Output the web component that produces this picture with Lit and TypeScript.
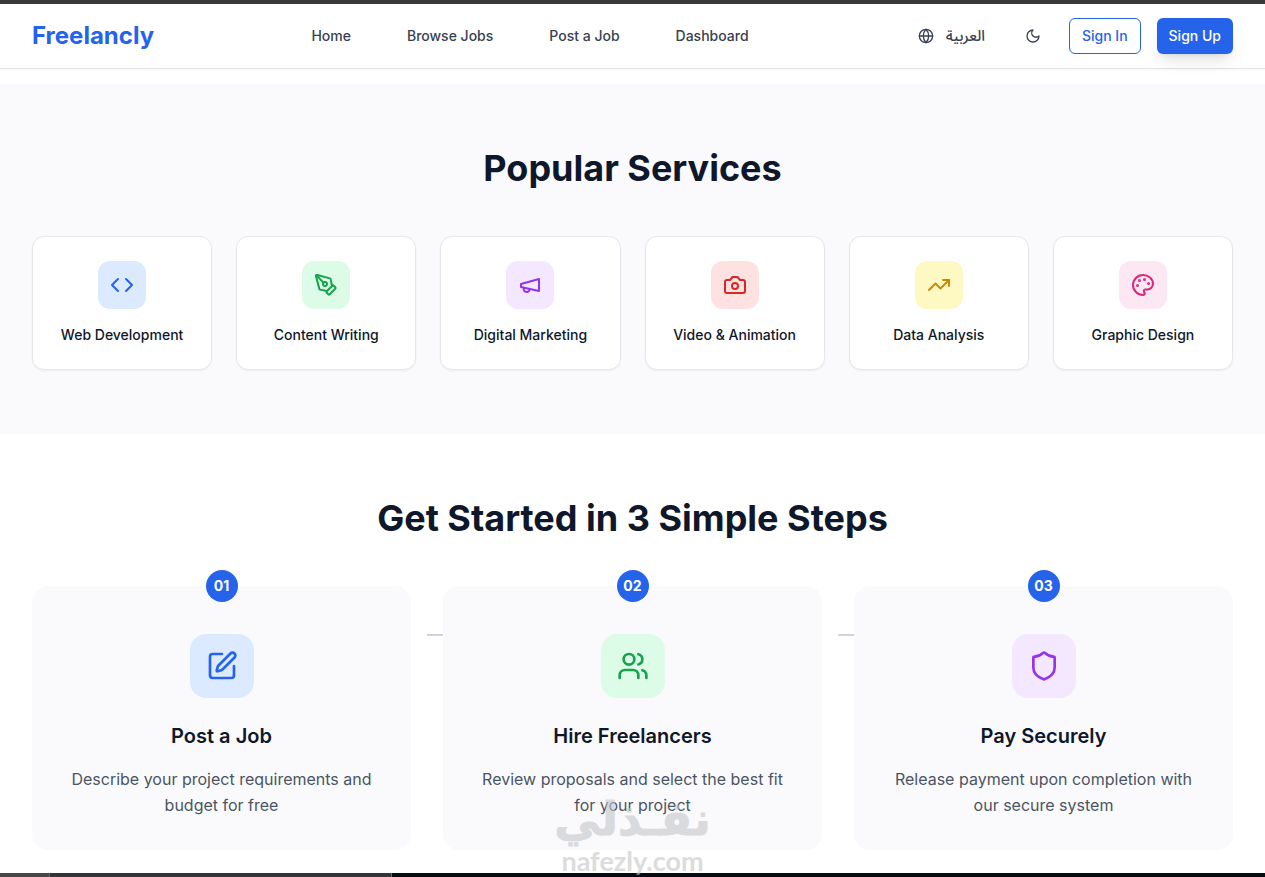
import { LitElement, html, css, svg } from "lit";
import { customElement } from "lit/decorators.js";

const icons = {
  globe: svg`<circle cx="12" cy="12" r="10"/><path d="M12 2a14.5 14.5 0 0 0 0 20 14.5 14.5 0 0 0 0-20"/><path d="M2 12h20"/>`,
  moon: svg`<path d="M12 3a6 6 0 0 0 9 9 9 9 0 1 1-9-9Z"/>`,
  code: svg`<path d="m16 18 6-6-6-6"/><path d="m8 6-6 6 6 6"/>`,
  pen: svg`<path d="M15.707 21.293a1 1 0 0 1-1.414 0l-1.586-1.586a1 1 0 0 1 0-1.414l5.586-5.586a1 1 0 0 1 1.414 0l1.586 1.586a1 1 0 0 1 0 1.414z"/><path d="m18 13-1.375-6.874a1 1 0 0 0-.746-.776L3.235 2.028a1 1 0 0 0-1.207 1.207L5.35 15.879a1 1 0 0 0 .776.746L13 18"/><path d="m2.3 2.3 7.286 7.286"/><circle cx="11" cy="11" r="2"/>`,
  megaphone: svg`<path d="m3 11 18-5v12L3 14v-3z"/><path d="M11.6 16.8a3 3 0 1 1-5.8-1.6"/>`,
  camera: svg`<path d="M14.5 4h-5L7 7H4a2 2 0 0 0-2 2v9a2 2 0 0 0 2 2h16a2 2 0 0 0 2-2V9a2 2 0 0 0-2-2h-3l-2.5-3z"/><circle cx="12" cy="13" r="3"/>`,
  trend: svg`<path d="m22 7-8.5 8.5-5-5L2 17"/><path d="M16 7h6v6"/>`,
  palette: svg`<circle cx="13.5" cy="6.5" r=".5" fill="currentColor"/><circle cx="17.5" cy="10.5" r=".5" fill="currentColor"/><circle cx="8.5" cy="7.5" r=".5" fill="currentColor"/><circle cx="6.5" cy="12.5" r=".5" fill="currentColor"/><path d="M12 2C6.5 2 2 6.5 2 12s4.5 10 10 10c.926 0 1.648-.746 1.648-1.688 0-.437-.18-.835-.437-1.125-.29-.289-.438-.652-.438-1.125a1.64 1.64 0 0 1 1.668-1.668h1.996c3.051 0 5.555-2.503 5.555-5.554C21.965 6.012 17.461 2 12 2z"/>`,
  edit: svg`<path d="M12 3H5a2 2 0 0 0-2 2v14a2 2 0 0 0 2 2h14a2 2 0 0 0 2-2v-7"/><path d="M18.375 2.625a1 1 0 0 1 3 3l-9.013 9.014a2 2 0 0 1-.853.505l-2.873.84a.5.5 0 0 1-.62-.62l.84-2.873a2 2 0 0 1 .506-.852z"/>`,
  users: svg`<path d="M16 21v-2a4 4 0 0 0-4-4H6a4 4 0 0 0-4 4v2"/><circle cx="9" cy="7" r="4"/><path d="M22 21v-2a4 4 0 0 0-3-3.87"/><path d="M16 3.13a4 4 0 0 1 0 7.75"/>`,
  shield: svg`<path d="M20 13c0 5-3.5 7.5-7.66 8.95a1 1 0 0 1-.67-.01C7.5 20.5 4 18 4 13V6a1 1 0 0 1 1-1c2 0 4.5-1.2 6.24-2.72a1.17 1.17 0 0 1 1.52 0C14.51 3.81 17 5 19 5a1 1 0 0 1 1 1z"/>`,
};

type IconName = keyof typeof icons;

const icon = (name: IconName, size: number) => html`<svg
  width=${size} height=${size} viewBox="0 0 24 24" fill="none" stroke="currentColor"
  stroke-width="2" stroke-linecap="round" stroke-linejoin="round" aria-hidden="true"
>${icons[name]}</svg>`;

const links = ["Home", "Browse Jobs", "Post a Job", "Dashboard"];

const services: { icon: IconName; tone: string; label: string }[] = [
  { icon: "code", tone: "blue", label: "Web Development" },
  { icon: "pen", tone: "green", label: "Content Writing" },
  { icon: "megaphone", tone: "purple", label: "Digital Marketing" },
  { icon: "camera", tone: "red", label: "Video & Animation" },
  { icon: "trend", tone: "yellow", label: "Data Analysis" },
  { icon: "palette", tone: "pink", label: "Graphic Design" },
];

const steps: { icon: IconName; tone: string; title: string; text: string }[] = [
  { icon: "edit", tone: "blue", title: "Post a Job", text: "Describe your project requirements and budget for free" },
  { icon: "users", tone: "green", title: "Hire Freelancers", text: "Review proposals and select the best fit for your project" },
  { icon: "shield", tone: "purple", title: "Pay Securely", text: "Release payment upon completion with our secure system" },
];

@customElement("app-root")
export class AppRoot extends LitElement {
  static styles = css`
    :host {
      display: flex;
      flex-direction: column;
      height: 100vh;
      overflow: hidden;
      position: relative;
      background: #fff;
      color: #0f172a;
      font-family: Inter, "DejaVu Sans", sans-serif;
      font-size: 14px;
      line-height: 20px;
    }
    * { box-sizing: border-box; }
    h2, h3, p { margin: 0; }
    svg { display: block; flex: none; }
    a { color: inherit; text-decoration: none; }
    button { font: inherit; color: inherit; background: none; border: 0; cursor: pointer; }

    .edge { flex: none; height: 4px; background: #3a3a3a; }
    .header {
      flex: none;
      display: flex;
      align-items: center;
      justify-content: space-between;
      height: 65px;
      padding: 0 32px;
      border-bottom: 1px solid #e2e4e8;
      box-shadow: 0 1px 2px rgb(0 0 0 / 4%);
      font-weight: 500;
      color: #374151;
    }
    .logo { font-size: 24px; line-height: 32px; font-weight: 700; color: #2563eb; }
    .nav { display: flex; gap: 32px; }
    .nav a { padding: 8px 12px; }
    .actions { display: flex; align-items: center; gap: 16px; }
    .ghost, .sign {
      display: flex;
      align-items: center;
      justify-content: center;
      height: 36px;
      padding: 0 12px;
      border-radius: 6px;
    }
    .ghost { gap: 12px; }
    .arabic { font-family: "Noto Sans Arabic", "DejaVu Sans", sans-serif; font-size: 15px; }
    .sign.in { border: 1px solid #2563eb; color: #2563eb; }
    .sign.up {
      background: #2563eb;
      color: #fff;
      box-shadow: 0 10px 15px -3px rgb(0 0 0 / 10%), 0 4px 6px -4px rgb(0 0 0 / 10%);
    }

    .main { flex: 1; min-height: 0; overflow-y: auto; scrollbar-width: none; padding-top: 15px; }
    .section { padding: 64px 32px; }
    .tinted { background: #fafafc; }
    .title {
      margin-bottom: 48px;
      text-align: center;
      font-size: 36px;
      line-height: 40px;
      font-weight: 700;
    }
    .services { display: grid; grid-template-columns: repeat(6, 1fr); gap: 24px; }
    .service {
      display: flex;
      flex-direction: column;
      align-items: center;
      gap: 16px;
      padding: 24px 8px;
      border: 1px solid #e5e7eb;
      border-radius: 12px;
      background: #fff;
      box-shadow: 0 1px 2px rgb(0 0 0 / 5%);
      font-weight: 500;
      text-align: center;
    }
    .tile { display: grid; place-items: center; width: 48px; height: 48px; border-radius: 12px; }
    .tile.large { width: 64px; height: 64px; border-radius: 16px; margin: 16px 0 24px; }
    .blue { background: #dbeafe; color: #2563eb; }
    .green { background: #dcfce7; color: #16a34a; }
    .purple { background: #f3e8ff; color: #9333ea; }
    .red { background: #fee2e2; color: #dc2626; }
    .yellow { background: #fef9c3; color: #ca8a04; }
    .pink { background: #fce7f3; color: #db2777; }

    .steps { display: grid; grid-template-columns: repeat(3, 1fr); gap: 32px; }
    .step {
      position: relative;
      display: flex;
      flex-direction: column;
      align-items: center;
      padding: 32px;
      border-radius: 16px;
      background: #fafafd;
      text-align: center;
    }
    .step:not(:last-child)::after {
      content: "";
      position: absolute;
      top: 48px;
      right: -32px;
      width: 16px;
      height: 2px;
      background: #d1d5db;
    }
    .badge {
      position: absolute;
      top: -16px;
      display: grid;
      place-items: center;
      width: 32px;
      height: 32px;
      border-radius: 50%;
      background: #2563eb;
      color: #fff;
      font-weight: 700;
    }
    .step h3 { margin-bottom: 16px; font-size: 20px; line-height: 28px; font-weight: 600; }
    .step p { font-size: 16px; line-height: 26px; color: #4b5563; }

    .watermark {
      position: absolute;
      bottom: 0;
      left: 50%;
      transform: translateX(-50%);
      display: flex;
      flex-direction: column;
      align-items: center;
      color: #c4c6c8;
      opacity: 0.6;
      font-weight: 700;
      white-space: nowrap;
      pointer-events: none;
    }
    .mark {
      font-family: "DejaVu Sans", sans-serif;
      font-size: 46px;
      line-height: 52px;
      -webkit-text-stroke: 1px currentColor;
    }
    .site { font-family: Lato, sans-serif; font-size: 27px; line-height: 32px; }
    .dock { flex: none; display: flex; height: 4px; background: #020c12; }
    .dock i:first-child { width: 49px; background: #474747; }
    .dock i:last-child { width: 343px; background: #323537; border: solid #68696a; border-width: 0 1px; }
  `;

  render() {
    return html`
      <div class="edge"></div>
      <header class="header">
        <a class="logo" href="#">Freelancly</a>
        <nav class="nav">${links.map((l) => html`<a href="#">${l}</a>`)}</nav>
        <div class="actions">
          <button class="ghost">${icon("globe", 16)}<span class="arabic" lang="ar">العربية</span></button>
          <button class="ghost" aria-label="Toggle dark mode">${icon("moon", 16)}</button>
          <button class="sign in">Sign In</button>
          <button class="sign up">Sign Up</button>
        </div>
      </header>
      <main class="main">
        <section class="section tinted">
          <h2 class="title">Popular Services</h2>
          <div class="services">
            ${services.map((s) => html`<a class="service" href="#">
              <span class="tile ${s.tone}">${icon(s.icon, 24)}</span>
              <span>${s.label}</span>
            </a>`)}
          </div>
        </section>
        <section class="section">
          <h2 class="title">Get Started in 3 Simple Steps</h2>
          <div class="steps">
            ${steps.map((s, i) => html`<article class="step">
              <span class="badge">0${i + 1}</span>
              <span class="tile large ${s.tone}">${icon(s.icon, 32)}</span>
              <h3>${s.title}</h3>
              <p>${s.text}</p>
            </article>`)}
          </div>
        </section>
      </main>
      <div class="dock"><i></i><i></i></div>
      <div class="watermark">
        <span class="mark" lang="ar">نفـذلي</span>
        <span class="site">nafezly.com</span>
      </div>
    `;
  }
}
